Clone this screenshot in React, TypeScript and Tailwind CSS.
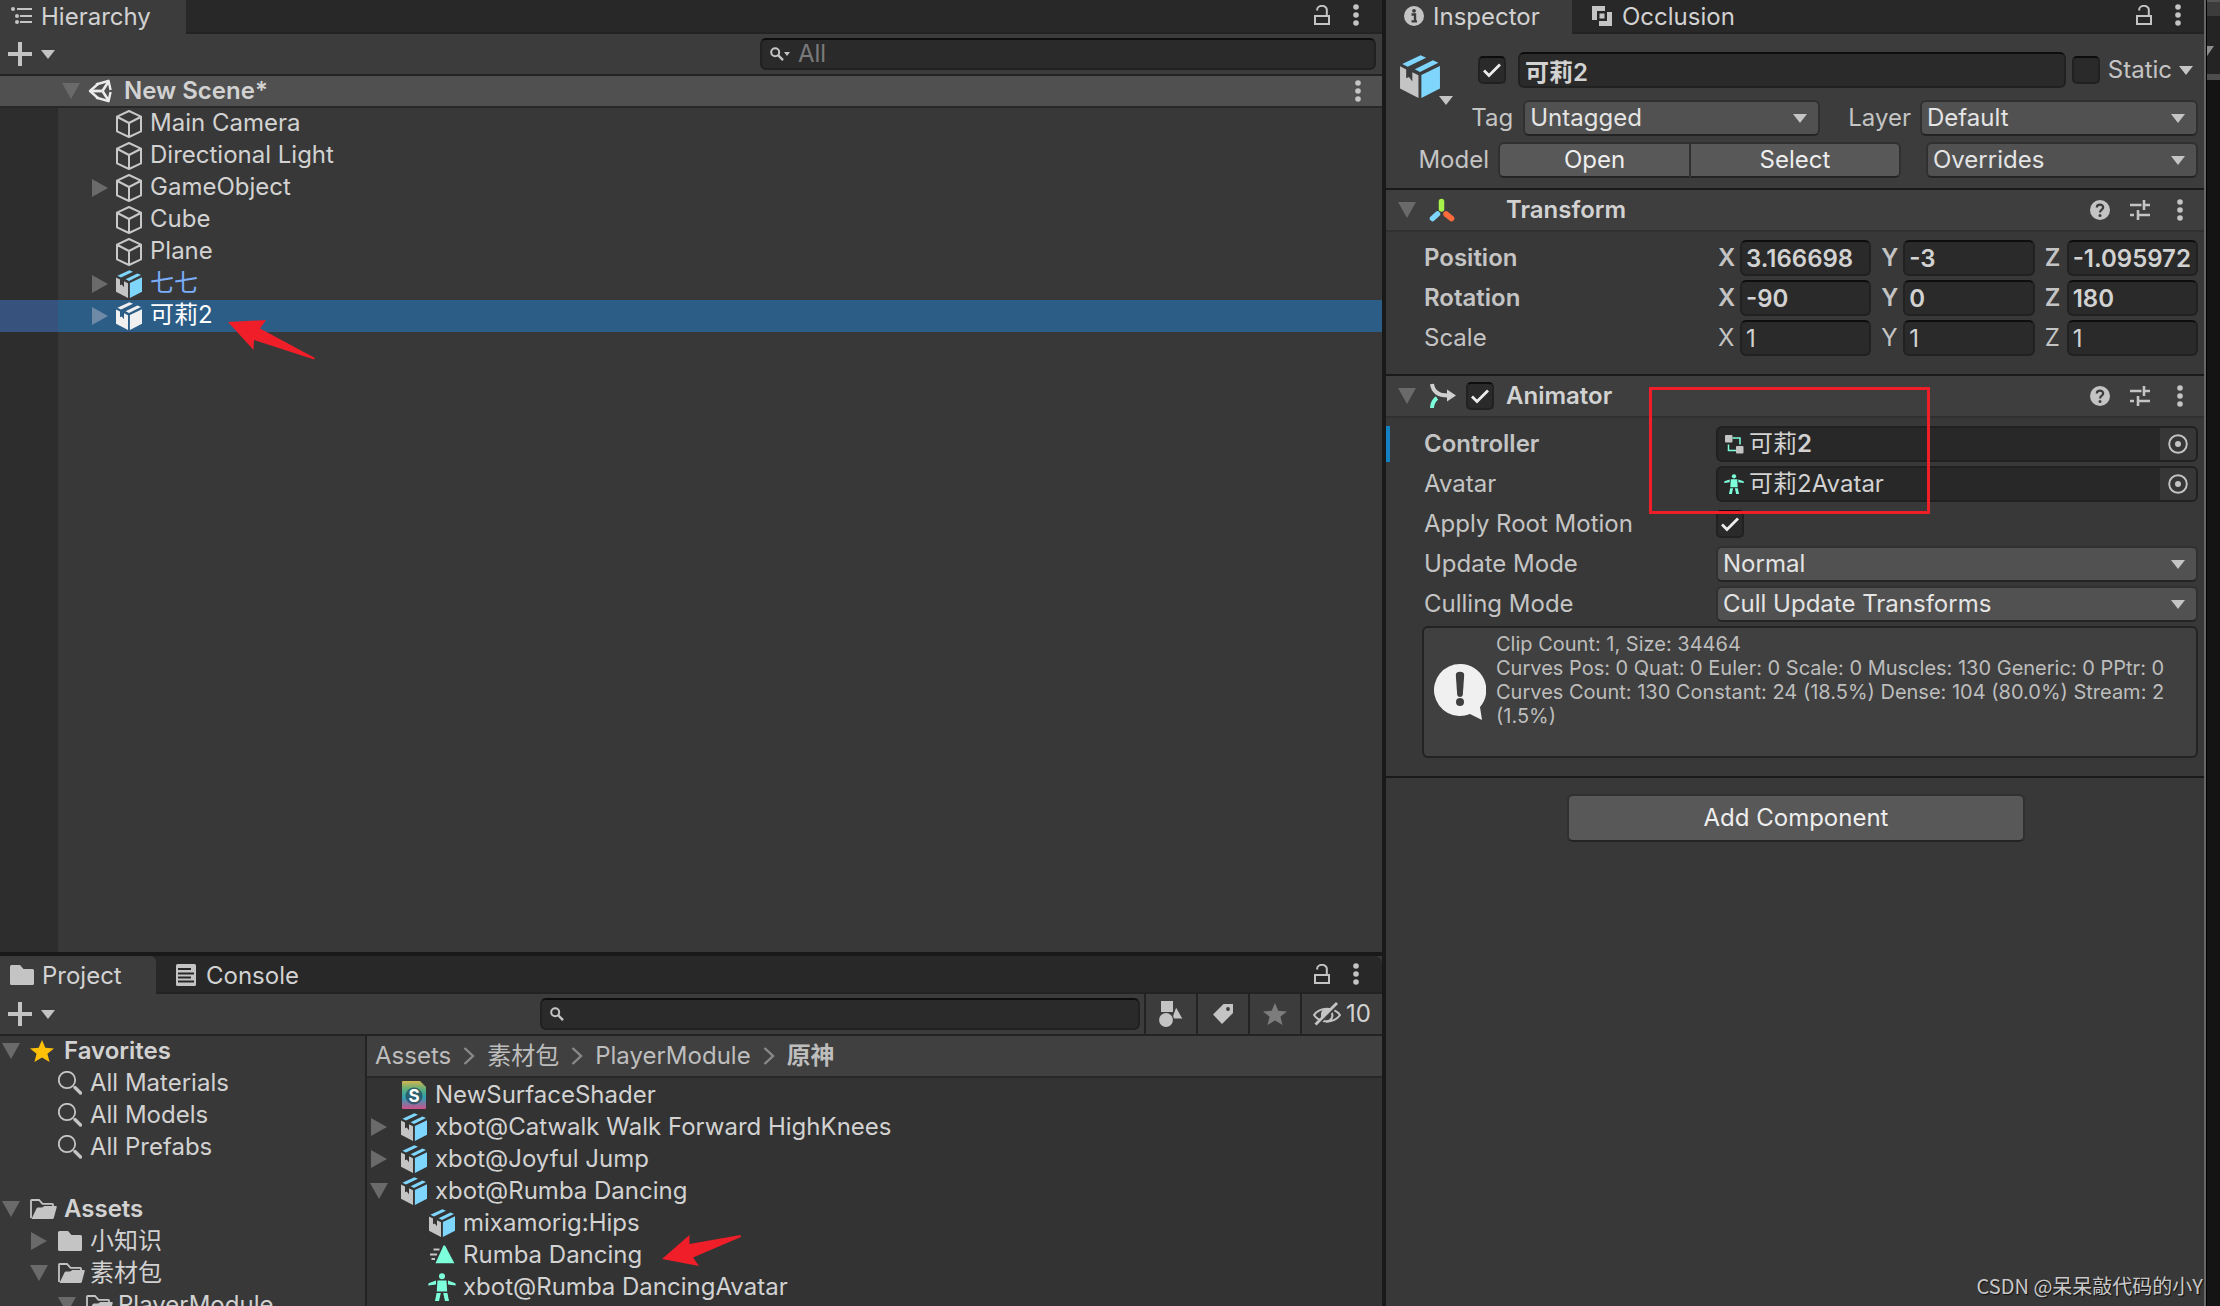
import React from "react";

type P = { className?: string };

/* ---------- icons ---------- */

const Down = ({ className = "w-[14px] h-[9px] text-[#c4c4c4]" }: P) => (
  <svg viewBox="0 0 14 9" className={`shrink-0 ${className}`} preserveAspectRatio="none" aria-hidden="true">
    <path d="M0 0H14L7 9Z" fill="currentColor" />
  </svg>
);

const Lock = () => (
  <svg viewBox="0 0 16 20" className="h-5 w-4" aria-hidden="true">
    <path d="M3.2 5.5V4.6a4.8 3.8 0 0 1 9.6 0V10.5" fill="none" stroke="#c4c4c4" strokeWidth="2" />
    <rect x="1" y="11" width="14" height="8" fill="none" stroke="#c4c4c4" strokeWidth="2" />
  </svg>
);

const Dots = () => (
  <svg viewBox="0 0 6 22" className="h-[22px] w-[6px]" aria-hidden="true">
    <circle cx="3" cy="3" r="2.8" fill="#c4c4c4" />
    <circle cx="3" cy="11" r="2.8" fill="#c4c4c4" />
    <circle cx="3" cy="19" r="2.8" fill="#c4c4c4" />
  </svg>
);

const Plus = () => (
  <svg viewBox="0 0 24 24" className="h-6 w-6" aria-hidden="true">
    <path d="M12 0V24M0 12H24" stroke="#c4c4c4" strokeWidth="4" />
  </svg>
);

const HierarchyIcon = () => (
  <svg viewBox="0 0 22 18" className="h-[18px] w-[22px]" aria-hidden="true">
    <g fill="#c4c4c4">
      <circle cx="2" cy="2" r="2" />
      <rect x="6" y="1" width="15" height="2" />
      <circle cx="6" cy="9" r="2" />
      <rect x="9" y="8" width="12" height="2" />
      <circle cx="6" cy="15" r="2" />
      <rect x="9" y="14" width="12" height="2" />
    </g>
  </svg>
);

const UnityLogo = () => (
  <svg viewBox="0 0 24 24" className="h-6 w-6" aria-hidden="true">
    <g fill="none" stroke="#ececec" strokeWidth="2.4" strokeLinejoin="round">
      <path d="M14.5 12H3" strokeWidth="2.8" />
      <path d="M14.5 12L20.5 2.5M14.5 12L20.5 21.5" strokeWidth="2.6" />
      <path d="M10.5 4.5L2 12l8.5 7.5" />
      <path d="M8 5.5L20.5 1.8L22.6 11" />
      <path d="M8 18.5L20.5 22.2L22.6 13" />
    </g>
  </svg>
);

const Cube = () => (
  <svg viewBox="0 0 26 28" className="h-7 w-[26px]" aria-hidden="true">
    <path
      d="M13 1L25 6.6V21.4L13 27L1 21.4V6.6ZM1.4 7L13 13L24.6 7M13 13V27"
      fill="none"
      stroke="#c8c8c8"
      strokeWidth="2"
      strokeLinejoin="round"
    />
  </svg>
);

const Prefab = ({ className = "h-7 w-[26px]", white = false }: P & { white?: boolean }) => (
  <svg viewBox="0 0 26 28" className={`shrink-0 ${className}`} aria-hidden="true">
    <g fill={white ? "#f0f0f0" : "#7fd6fd"}>
      <path d="M1.4 5.8L13.4 0.2L17 1.8L5 7.6Z" />
      <path d="M9.6 9.2L21.4 3.4L25 5L13 11Z" />
      <path d="M13.9 13L26 7.2V21.8L13.9 28Z" />
    </g>
    <path
      d="M0 7.4L4 9.4V15.2L5.8 14.4L8 17.2V11.3L12 13.2V28L0 21.8Z"
      fill={white ? "#f0f0f0" : "#c4c4c4"}
    />
  </svg>
);

const Avatar = ({ className = "h-7 w-7" }: P) => (
  <svg viewBox="0 0 28 28" className={`shrink-0 ${className}`} aria-hidden="true">
    <g fill="#7effdc">
      <circle cx="14" cy="3.2" r="3" />
      <path d="M9.5 7.5H18.5L19.2 18.5H8.8Z" />
      <path d="M8 7.6L0.6 10.2L0.2 12.6L8 11.6Z" />
      <path d="M20 7.6L27.4 10.2L27.8 12.6L20 11.6Z" />
      <path d="M8.6 20H12.8L11 28H7Z" />
      <path d="M15.2 20H19.4L21 28H17Z" />
    </g>
  </svg>
);

const Clip = () => (
  <svg viewBox="0 0 26 20" className="h-5 w-[26px]" aria-hidden="true">
    <path d="M16 0.5L25.4 18.2H6.5L14.5 0.5Z" fill="#7effdc" />
    <path d="M4.5 4.5H10.5M1 9.5H8M2.5 14H6" stroke="#c4c4c4" strokeWidth="1.8" />
  </svg>
);

const Shader = () => (
  <svg viewBox="0 0 24 28" className="h-7 w-6" aria-hidden="true">
    <defs>
      <linearGradient id="shader" x1="0" y1="0" x2="0" y2="1">
        <stop offset="0" stopColor="#d4b550" />
        <stop offset="0.3" stopColor="#5cae7c" />
        <stop offset="0.6" stopColor="#2f9fb4" />
        <stop offset="1" stopColor="#d0508c" />
      </linearGradient>
    </defs>
    <path d="M0 1Q0 0 1 0H18L24 6V27Q24 28 23 28H1Q0 28 0 27Z" fill="url(#shader)" />
    <circle cx="12" cy="15" r="8.5" fill="#234b5c" opacity="0.75" />
    <text x="12" y="21" textAnchor="middle" fontSize="17" fontWeight="700" fill="#fff">
      S
    </text>
  </svg>
);

const FolderClosed = () => (
  <svg viewBox="0 0 24 20" className="h-5 w-6" aria-hidden="true">
    <path d="M0 1.5Q0 0 1.5 0H10L13.5 4H22.5Q24 4 24 5.5V18.5Q24 20 22.5 20H1.5Q0 20 0 18.5Z" fill="#c4c4c4" />
  </svg>
);

const FolderOpen = () => (
  <svg viewBox="0 0 27 20" className="h-5 w-[27px]" aria-hidden="true">
    <path d="M1 19V1.8Q1 1 1.8 1H9L12.5 4.8H22.2Q23 4.8 23 5.6V8" fill="none" stroke="#c4c4c4" strokeWidth="1.8" />
    <path d="M6.5 9.5Q7 8.6 8 8.6H12L14.5 7H26Q27 7 26.7 8.2L23.8 19Q23.5 20 22.5 20H1.5Z" fill="#c4c4c4" />
  </svg>
);

const Magnifier = () => (
  <svg viewBox="0 0 24 24" className="h-6 w-6" aria-hidden="true">
    <circle cx="9" cy="9" r="8.2" fill="none" stroke="#c4c4c4" strokeWidth="1.8" />
    <path d="M17 16.5L22.5 22" stroke="#c4c4c4" strokeWidth="3.4" strokeLinecap="round" />
  </svg>
);

const SearchGlyph = () => (
  <svg viewBox="0 0 14 14" className="h-[14px] w-[14px] shrink-0" aria-hidden="true">
    <circle cx="5.2" cy="5.2" r="4" fill="none" stroke="#c4c4c4" strokeWidth="2" />
    <path d="M8 8L13 13.2" stroke="#c4c4c4" strokeWidth="2.4" />
  </svg>
);

const Star = ({ className = "text-[#ffc107]" }: P) => (
  <svg viewBox="0 0 24 22" className={`h-[22px] w-6 ${className}`} aria-hidden="true">
    <path d="M12 0L15.3 7.8L24 8.4L17.4 13.8L19.6 22L12 17.5L4.4 22L6.6 13.8L0 8.4L8.7 7.8Z" fill="currentColor" />
  </svg>
);

const ConsoleIcon = () => (
  <svg viewBox="0 0 20 22" className="h-[22px] w-5" aria-hidden="true">
    <rect width="20" height="22" rx="1.5" fill="#c4c4c4" />
    <path d="M2 5H15M2 9.5H18M2 13.5H15M2 17.5H18" stroke="#282828" strokeWidth="1.8" />
  </svg>
);

const InfoCircle = () => (
  <svg viewBox="0 0 20 20" className="h-5 w-5" aria-hidden="true">
    <circle cx="10" cy="10" r="10" fill="#c4c4c4" />
    <circle cx="10" cy="4.8" r="1.9" fill="#3c3c3c" />
    <path d="M7.5 8.5H11V15M7.5 15.4H13" stroke="#3c3c3c" strokeWidth="2.4" fill="none" />
  </svg>
);

const OcclusionIcon = () => (
  <svg viewBox="0 0 20 20" className="h-5 w-5" aria-hidden="true">
    <path d="M0 0H13V5H5V14H0Z" fill="#c4c4c4" />
    <path d="M15 6H20V20H7V15H15Z" fill="#c4c4c4" />
    <rect x="7.5" y="7.5" width="5" height="5" fill="#c4c4c4" />
  </svg>
);

const Help = () => (
  <svg viewBox="0 0 20 20" className="h-5 w-5" aria-hidden="true">
    <circle cx="10" cy="10" r="10" fill="#c4c4c4" />
    <path d="M6.8 7.4C6.8 3.6 13.2 3.6 13.2 7.4C13.2 9.6 10 9.6 10 12.4" fill="none" stroke="#3c3c3c" strokeWidth="2.2" />
    <circle cx="10" cy="15.5" r="1.5" fill="#3c3c3c" />
  </svg>
);

const Presets = () => (
  <svg viewBox="0 0 20 20" className="h-5 w-5" aria-hidden="true">
    <path d="M0 5H11.5M14 0V10M14 5H20M0 15H4M8 10V20M8 15H20" stroke="#c4c4c4" strokeWidth="2.6" />
  </svg>
);

const TransformIcon = () => (
  <svg viewBox="0 0 26 24" className="h-6 w-[26px]" aria-hidden="true">
    <g strokeLinecap="round" strokeWidth="5.5">
      <path d="M12.5 3.5V11" stroke="#a6f24b" />
      <path d="M8.5 16L3.5 20.5" stroke="#7fd6fd" />
      <path d="M17 16L22.5 20.5" stroke="#ff6b3d" />
    </g>
  </svg>
);

const AnimatorIcon = () => (
  <svg viewBox="0 0 28 26" className="h-[26px] w-7" aria-hidden="true">
    <path d="M3 1C4 8.5 9.5 12.5 19 12.5" fill="none" stroke="#d0d0d0" strokeWidth="4" />
    <path d="M18 6.5L27 12.5L18 18.5Z" fill="#d0d0d0" />
    <path d="M3 25C3.2 20.5 4.5 17.5 8 15" fill="none" stroke="#7effdc" strokeWidth="4" />
  </svg>
);

const ControllerIcon = () => (
  <svg viewBox="0 0 20 20" className="h-5 w-5 shrink-0" aria-hidden="true">
    <rect x="1" y="1" width="7.5" height="7.5" rx="1" fill="#c4c4c4" />
    <rect x="12" y="12" width="7.5" height="7.5" rx="1" fill="#c4c4c4" />
    <path d="M8.5 4H16V10.5M4.5 10.5V16.5H12" fill="none" stroke="#7effdc" strokeWidth="1.5" />
  </svg>
);

const Target = () => (
  <svg viewBox="0 0 20 20" className="h-5 w-5" aria-hidden="true">
    <circle cx="10" cy="10" r="8.8" fill="none" stroke="#c4c4c4" strokeWidth="1.9" />
    <circle cx="10" cy="10" r="3" fill="#c4c4c4" />
  </svg>
);

const Notice = () => (
  <svg viewBox="0 0 52 56" className="h-14 w-[52px] shrink-0" aria-hidden="true">
    <path d="M26 0A26 26 0 1 0 36 50L48 56L46 43A26 26 0 0 0 26 0Z" fill="#f0f0f0" />
    <path d="M21.8 11Q22 7.8 26 7.8T30.2 11L28.8 31Q28.4 33 26 33T23.2 31Z" fill="#3f3f3f" />
    <circle cx="26" cy="38" r="4" fill="#3f3f3f" />
  </svg>
);

const Shapes = () => (
  <svg viewBox="0 0 24 26" className="h-[26px] w-6" aria-hidden="true">
    <rect x="2" y="0" width="12" height="11" fill="#c4c4c4" />
    <path d="M17 5.5L24 18H12.5Z" fill="#c4c4c4" stroke="#3c3c3c" strokeWidth="1" />
    <circle cx="7" cy="19" r="7.5" fill="#c4c4c4" stroke="#3c3c3c" strokeWidth="1.2" />
  </svg>
);

const Tag = () => (
  <svg viewBox="0 0 20 20" className="h-5 w-5" aria-hidden="true">
    <path d="M10.5 0H20V9L9 20L0 10.5Z" fill="#c4c4c4" />
    <circle cx="15" cy="5" r="1.9" fill="#3c3c3c" />
  </svg>
);

const HiddenEye = () => (
  <svg viewBox="0 0 28 24" className="h-6 w-7" aria-hidden="true">
    <path d="M1 13C7 4.5 21 4.5 27 13C21 21.5 7 21.5 1 13Z" fill="none" stroke="#c4c4c4" strokeWidth="2" />
    <path d="M8 13a6 6.5 0 0 1 11-4L11 18.5A6 6 0 0 1 8 13Z" fill="#c4c4c4" />
    <path d="M18.5 10.5A6 6 0 0 1 13 19.5" fill="none" stroke="#c4c4c4" strokeWidth="2" />
    <path d="M3.5 23.5L26 1.8" stroke="#3c3c3c" strokeWidth="3" />
    <path d="M2.5 22.5L24 1" stroke="#c4c4c4" strokeWidth="2.8" />
  </svg>
);

/* ---------- shared controls ---------- */

const Foldout = ({ open = false, light = false, label }: { open?: boolean; light?: boolean; label: string }) => (
  <button
    type="button"
    aria-label={label}
    aria-expanded={open}
    className={`flex h-8 w-[18px] shrink-0 items-center justify-center ${light ? "text-[#6e8aa6]" : "text-[#6a6a6a]"}`}
  >
    {open ? (
      <Down className="h-4 w-[18px]" />
    ) : (
      <svg viewBox="0 0 16 18" className="h-[18px] w-4" aria-hidden="true">
        <path d="M0 0L16 9L0 18Z" fill="currentColor" />
      </svg>
    )}
  </button>
);

const FIELD = "rounded-[6px] border-2 border-[#212121] border-t-[#0d0d0d] bg-[#2a2a2a] text-[#d2d2d2] outline-none";

const Check = ({ label, checked = false }: { label: string; checked?: boolean }) => (
  <span className="relative block h-7 w-7 shrink-0">
    <input
      type="checkbox"
      aria-label={label}
      defaultChecked={checked}
      className="peer block h-7 w-7 appearance-none rounded-[5px] border-2 border-[#212121] border-t-[#0d0d0d] bg-[#2a2a2a]"
    />
    <svg
      viewBox="0 0 28 28"
      className="pointer-events-none absolute inset-0 hidden h-7 w-7 peer-checked:block"
      aria-hidden="true"
    >
      <path d="M6 14.5L11 19.5L22 8.5" fill="none" stroke="#ececec" strokeWidth="2.8" />
    </svg>
  </span>
);

const Select = ({ id, value, className = "" }: { id: string; value: string; className?: string }) => (
  <span className={`relative block ${className}`}>
    <select
      id={id}
      aria-label={value}
      defaultValue={value}
      className="block h-9 w-full appearance-none rounded-[6px] border-2 border-[#303030] border-b-[#242424] bg-[#515151] pl-[5px] text-2xl leading-7 text-[#e4e4e4] outline-none"
    >
      <option>{value}</option>
    </select>
    <span className="pointer-events-none absolute inset-y-0 right-[13px] flex items-center">
      <Down />
    </span>
  </span>
);

const TabTools = () => (
  <div className="ml-auto flex items-center gap-[23px] pr-[23px] pb-[3px]">
    <button type="button" aria-label="Lock">
      <Lock />
    </button>
    <button type="button" aria-label="Menu">
      <Dots />
    </button>
  </div>
);

const Tab = ({
  icon,
  children,
  active = false,
  className = "",
}: {
  icon: React.ReactNode;
  children: React.ReactNode;
  active?: boolean;
  className?: string;
}) => (
  <button
    type="button"
    role="tab"
    aria-selected={active}
    className={`flex items-center gap-2 text-[#d2d2d2] ${
      active ? "-mb-[2px] bg-[#3c3c3c] pb-[2px]" : ""
    } ${className}`}
  >
    {icon}
    <span className="pt-[2px] leading-8">{children}</span>
  </button>
);

const AddButton = () => (
  <button type="button" aria-label="Create" className="flex items-center gap-[9px] pl-2">
    <Plus />
    <Down />
  </button>
);

/* ---------- hierarchy ---------- */

const objects = [
  { name: "Main Camera", kind: "cube" },
  { name: "Directional Light", kind: "cube" },
  { name: "GameObject", kind: "cube", fold: true },
  { name: "Cube", kind: "cube" },
  { name: "Plane", kind: "cube" },
  { name: "七七", kind: "prefab", fold: true },
  { name: "可莉2", kind: "prefab", fold: true, selected: true },
];

const Hierarchy = () => (
  <section aria-label="Hierarchy" className="flex min-h-0 flex-1 flex-col bg-[#383838]">
    <div role="tablist" className="flex h-[34px] shrink-0 border-b-2 border-[#232323] bg-[#282828]">
      <Tab active icon={<HierarchyIcon />} className="w-[186px] pl-[11px]">
        Hierarchy
      </Tab>
      <TabTools />
    </div>
    <div className="flex h-[42px] shrink-0 items-center justify-between border-b-2 border-[#232323] bg-[#3c3c3c] pr-[6px]">
      <AddButton />
      <label className={`flex h-8 w-[616px] items-center pl-2 ${FIELD}`}>
        <SearchGlyph />
        <Down className="h-1 w-[6px] text-[#c4c4c4]" />
        <input
          type="text"
          aria-label="Search hierarchy"
          placeholder="All"
          className="ml-2 w-full bg-transparent leading-7 outline-none placeholder:text-[#7a7a7a]"
        />
      </label>
    </div>
    <div className="flex h-8 shrink-0 items-center border-b-2 border-[#282828] bg-[#505050] pr-[21px] pl-[62px]">
      <Foldout open label="Toggle scene" />
      <span className="mr-3 ml-2">
        <UnityLogo />
      </span>
      <span className="font-semibold">New Scene*</span>
      <button type="button" aria-label="Scene menu" className="ml-auto">
        <Dots />
      </button>
    </div>
    <ul className="flex-1 bg-linear-to-r from-[#2d2d2d] from-[58px] to-transparent to-[58px]">
      {objects.map((o) => (
        <li
          key={o.name}
          className={`relative flex h-8 items-center pl-[91px] ${
            o.selected ? "bg-linear-to-r from-[#37527c] from-[58px] to-[#2c5d87] to-[58px] text-white" : ""
          }`}
        >
          <span className="w-[25px]">{o.fold && <Foldout light={o.selected} label={`Toggle ${o.name}`} />}</span>
          {o.kind === "cube" ? <Cube /> : <Prefab white={o.selected} />}
          <span className={`ml-2 pb-[2px] ${o.name === "七七" ? "text-[#7baefa]" : ""}`}>{o.name}</span>
          {o.selected && (
            <svg viewBox="0 0 88 40" className="absolute top-5 left-[228px] h-10 w-[88px]" aria-hidden="true">
              <path d="M0 2L38 0L32 8.5L87 38L86 39.5L26 20L25.5 30Z" fill="#f01e28" />
            </svg>
          )}
        </li>
      ))}
    </ul>
  </section>
);

/* ---------- project ---------- */

const assets = [
  { name: "NewSurfaceShader", icon: <Shader />, depth: 0 },
  { name: "xbot@Catwalk Walk Forward HighKnees", icon: <Prefab />, depth: 0, fold: "closed" },
  { name: "xbot@Joyful Jump", icon: <Prefab />, depth: 0, fold: "closed" },
  { name: "xbot@Rumba Dancing", icon: <Prefab />, depth: 0, fold: "open" },
  { name: "mixamorig:Hips", icon: <Prefab />, depth: 1 },
  { name: "Rumba Dancing", icon: <Clip />, depth: 1, arrow: true },
  { name: "xbot@Rumba DancingAvatar", icon: <Avatar />, depth: 1 },
];

const Crumb = () => (
  <svg viewBox="0 0 12 18" className="mx-3 h-[18px] w-3" aria-hidden="true">
    <path d="M1.5 1L10 9L1.5 17" fill="none" stroke="#8a8a8a" strokeWidth="2.4" />
  </svg>
);

const Project = () => (
  <section aria-label="Project" className="flex h-[350px] shrink-0 flex-col overflow-hidden bg-[#383838]">
    <div role="tablist" className="flex h-[38px] shrink-0 rounded-tr-[8px] border-b-2 border-[#232323] bg-[#282828] pt-[2px]">
      <Tab active icon={<FolderClosed />} className="-mt-[2px] w-[156px] rounded-tr-[6px] pt-[2px] pl-[10px]">
        Project
      </Tab>
      <Tab icon={<ConsoleIcon />} className="pl-5">
        <span className="ml-[2px]">Console</span>
      </Tab>
      <TabTools />
    </div>
    <div className="flex h-[42px] shrink-0 border-b-2 border-[#232323] bg-[#3c3c3c]">
      <AddButton />
      <label className={`mr-1 ml-auto flex h-8 w-[600px] items-center self-center pl-2 ${FIELD}`}>
        <SearchGlyph />
        <input type="text" aria-label="Search assets" className="ml-2 w-full bg-transparent leading-7 outline-none" />
      </label>
      <button type="button" aria-label="Search by type" className="flex w-[52px] items-center justify-center border-l-2 border-[#232323]">
        <Shapes />
      </button>
      <button type="button" aria-label="Search by label" className="flex w-[52px] items-center justify-center border-l-2 border-[#232323]">
        <Tag />
      </button>
      <button type="button" aria-label="Save search" className="flex w-[52px] items-center justify-center border-l-2 border-[#232323]">
        <Star className="text-[#7c7c7c]" />
      </button>
      <button type="button" className="flex w-[82px] items-center justify-center gap-[5px] border-l-2 border-[#232323]">
        <HiddenEye />
        <span>10</span>
      </button>
    </div>
    <div className="flex min-h-0 flex-1">
      <div className="w-[367px] shrink-0 border-r-2 border-[#232323]">
        <ul className="-mt-px">
          <li className="flex h-8 items-center pl-[2px] font-semibold">
            <Foldout open label="Toggle Favorites" />
            <span className="mr-[10px] ml-[10px]">
              <Star />
            </span>
            Favorites
          </li>
          {["All Materials", "All Models", "All Prefabs"].map((n) => (
            <li key={n} className="flex h-8 items-center gap-2 pl-[58px]">
              <Magnifier />
              {n}
            </li>
          ))}
          <li className="mt-[30px] flex h-8 items-center pl-[2px] font-semibold">
            <Foldout open label="Toggle Assets" />
            <span className="mr-[7px] ml-[10px]">
              <FolderOpen />
            </span>
            Assets
          </li>
          <li className="flex h-8 items-center pl-[30px]">
            <Foldout label="Toggle 小知识" />
            <span className="mr-2 ml-[10px]">
              <FolderClosed />
            </span>
            小知识
          </li>
          <li className="flex h-8 items-center pl-[30px]">
            <Foldout open label="Toggle 素材包" />
            <span className="mr-[5px] ml-[10px]">
              <FolderOpen />
            </span>
            素材包
          </li>
          <li className="flex h-8 items-center pl-[58px]">
            <Foldout open label="Toggle PlayerModule" />
            <span className="mr-[5px] ml-[10px]">
              <FolderOpen />
            </span>
            PlayerModule
          </li>
        </ul>
      </div>
      <div className="min-w-0 flex-1 bg-[#333333]">
        <nav aria-label="Breadcrumb" className="flex h-[42px] items-center border-b-2 border-[#282828] bg-[#404040] pl-2 text-[#bdbdbd]">
          <a href="#assets">Assets</a>
          <Crumb />
          <a href="#pack">素材包</a>
          <Crumb />
          <a href="#module">PlayerModule</a>
          <Crumb />
          <a href="#folder" className="font-semibold">
            原神
          </a>
        </nav>
        <ul className="pt-px">
          {assets.map((a) => (
            <li key={a.name} className={`relative flex h-8 items-center ${a.depth ? "pl-[31px]" : "pl-[3px]"}`}>
              <span className="w-[30px]">{a.fold && <Foldout open={a.fold === "open"} label={`Toggle ${a.name}`} />}</span>
              <span className="mr-[7px] flex w-7 justify-center">{a.icon}</span>
              {a.name}
              {a.arrow && (
                <svg viewBox="0 0 80 32" className="absolute top-[-4px] left-[295px] h-8 w-20" aria-hidden="true">
                  <path d="M0 24L27.5 0V9L78.5 0L79 2L31 22.5L37 31Z" fill="#f01e28" />
                </svg>
              )}
            </li>
          ))}
        </ul>
      </div>
    </div>
  </section>
);

/* ---------- inspector ---------- */

const Header = ({ title, icon, check }: { title: string; icon: React.ReactNode; check?: boolean }) => (
  <div className="flex h-11 items-center border-y-2 border-t-[#1a1a1a] border-b-[#303030] bg-[#3e3e3e] pr-[21px] pl-3">
    <Foldout open label={`Toggle ${title}`} />
    <span className="ml-[13px] flex w-[37px]">{icon}</span>
    <span className="w-10">{check && <Check checked label={`Enable ${title}`} />}</span>
    <h2 className="font-semibold">{title}</h2>
    <div className="ml-auto flex items-center">
      <button type="button" aria-label="Help">
        <Help />
      </button>
      <button type="button" aria-label="Presets" className="mr-[27px] ml-5">
        <Presets />
      </button>
      <button type="button" aria-label="Component menu">
        <Dots />
      </button>
    </div>
  </div>
);

const Row = ({
  label,
  bold = false,
  htmlFor,
  children,
}: {
  label: string;
  bold?: boolean;
  htmlFor?: string;
  children: React.ReactNode;
}) => (
  <div className={`flex h-9 items-center pr-[6px] pl-[38px] ${bold ? "font-semibold" : ""}`}>
    <label htmlFor={htmlFor} className="w-[292px] shrink-0 text-[#c4c4c4]">
      {label}
    </label>
    <div className="min-w-0 flex-1">{children}</div>
  </div>
);

const Vector = ({ label, values, bold }: { label: string; values: string[]; bold?: boolean }) => (
  <Row label={label} bold={bold}>
    <div className="grid grid-cols-3 gap-2">
      {["X", "Y", "Z"].map((axis, i) => (
        <label key={axis} className="flex items-center text-[#c4c4c4]">
          <span className="w-6 shrink-0 pl-[2px]">{axis}</span>
          <input type="text" defaultValue={values[i]} className={`h-9 w-full min-w-0 pl-1 ${FIELD}`} />
        </label>
      ))}
    </div>
  </Row>
);

const ObjectField = ({ icon, children, name }: { icon: React.ReactNode; children: React.ReactNode; name: string }) => (
  <div className="flex h-9 items-center overflow-hidden rounded-[6px] border-2 border-[#202020] bg-[#282828] pl-[6px]">
    {icon}
    <span className="ml-[5px] text-[#d2d2d2]">{children}</span>
    <button type="button" aria-label={`Pick ${name}`} className="ml-auto flex h-full w-9 items-center justify-center bg-[#373737]">
      <Target />
    </button>
  </div>
);

const Inspector = () => (
  <section aria-label="Inspector" className="flex w-[820px] shrink-0 flex-col border-r-2 border-[#666666] bg-[#383838]">
    <div role="tablist" className="flex h-[34px] shrink-0 border-b-2 border-[#232323] bg-[#282828]">
      <Tab active icon={<InfoCircle />} className="w-[186px] pl-[18px]">
        <span className="ml-px">Inspector</span>
      </Tab>
      <Tab icon={<OcclusionIcon />} className="pl-5">
        <span className="ml-[2px]">Occlusion</span>
      </Tab>
      <TabTools />
    </div>

    <div className="flex flex-col gap-[6px] bg-[#3c3c3c] pt-[18px] pr-[6px] pb-[10px] text-[#c4c4c4]">
      <div className="flex h-9 items-center pl-[14px]">
        <button type="button" aria-label="Choose icon" className="relative mr-[38px] h-9 w-10">
          <Prefab className="absolute top-[3px] left-0 h-[43px] w-10" />
          <Down className="absolute top-11 left-[39px] h-[9px] w-[14px]" />
        </button>
        <Check checked label="Active" />
        <input
          type="text"
          aria-label="Name"
          defaultValue="可莉2"
          className={`mr-[6px] ml-3 h-9 min-w-0 flex-1 pl-[5px] font-semibold ${FIELD}`}
        />
        <Check label="Static" />
        <span className="ml-2">Static</span>
        <button type="button" aria-label="Static options" className="mr-[5px] ml-[7px]">
          <Down />
        </button>
      </div>
      <div className="mt-[6px] flex h-9 items-center justify-end">
        <label htmlFor="tag" className="mr-[10px]">
          Tag
        </label>
        <Select id="tag" value="Untagged" className="w-[297px]" />
        <label htmlFor="layer" className="mr-[9px] ml-7">
          Layer
        </label>
        <Select id="layer" value="Default" className="w-[278px]" />
      </div>
      <div className="flex h-9 items-center justify-end">
        <span className="mr-[9px]">Model</span>
        <button
          type="button"
          className="h-9 w-[192px] rounded-l-[6px] border-2 border-r border-[#303030] border-b-[#242424] bg-[#585858] leading-8 text-[#eeeeee]"
        >
          Open
        </button>
        <button
          type="button"
          className="h-9 w-[211px] rounded-r-[6px] border-2 border-l border-[#303030] border-b-[#242424] bg-[#585858] leading-8 text-[#eeeeee]"
        >
          Select
        </button>
        <Select id="overrides" value="Overrides" className="ml-[25px] w-[272px]" />
      </div>
    </div>

    <Header title="Transform" icon={<TransformIcon />} />
    <div className="flex flex-col gap-1 pt-2 pb-[18px]">
      <Vector bold label="Position" values={["3.166698", "-3", "-1.095972"]} />
      <Vector bold label="Rotation" values={["-90", "0", "180"]} />
      <Vector label="Scale" values={["1", "1", "1"]} />
    </div>

    <div className="relative">
      <Header check title="Animator" icon={<AnimatorIcon />} />
      <div className="flex flex-col gap-1 pt-2">
        <div className="border-l-4 border-[#1380c4] [&>div]:pl-[34px]">
          <Row bold label="Controller">
            <ObjectField name="controller" icon={<ControllerIcon />}>
              <span className="font-normal">可莉</span>2
            </ObjectField>
          </Row>
        </div>
        <Row label="Avatar">
          <ObjectField name="avatar" icon={<Avatar className="h-5 w-5" />}>
            可莉2Avatar
          </ObjectField>
        </Row>
        <Row label="Apply Root Motion">
          <Check checked label="Apply Root Motion" />
        </Row>
        <Row label="Update Mode" htmlFor="update">
          <Select id="update" value="Normal" />
        </Row>
        <Row label="Culling Mode" htmlFor="culling">
          <Select id="culling" value="Cull Update Transforms" />
        </Row>
        <div className="mr-[6px] ml-9 flex h-[132px] rounded-[6px] border-2 border-[#232323] bg-[#404040] pt-1 pl-[10px] text-[20px] leading-6 text-[#bdbdbd]">
          <div className="mr-[10px] pt-8">
            <Notice />
          </div>
          <p>
            Clip Count: 1, Size: 34464
            <br />
            Curves Pos: 0 Quat: 0 Euler: 0 Scale: 0 Muscles: 130 Generic: 0 PPtr: 0
            <br />
            Curves Count: 130 Constant: 24 (18.5%) Dense: 104 (80.0%) Stream: 2
            <br />
            (1.5%)
          </p>
        </div>
      </div>
      <div className="pointer-events-none absolute top-[13px] left-[263px] h-[127px] w-[281px] border-[3px] border-[#f01e28]" />
    </div>

    <div className="mt-[18px] flex justify-center border-t-2 border-[#1a1a1a] pt-4">
      <button
        type="button"
        className="ml-[2px] h-12 w-[458px] rounded-[6px] border-2 border-[#303030] border-b-[#242424] bg-[#585858] text-[#eeeeee]"
      >
        Add Component
      </button>
    </div>
    <p className="mt-auto pr-px pb-[5px] text-right font-['Noto_Sans_CJK_SC',sans-serif] text-[20px] leading-[30px] text-[#c8c8c8] [text-shadow:1px_1px_1px_#111]">
      CSDN @呆呆敲代码的小Y
    </p>
  </section>
);

export default function App() {
  return (
    <main className="flex h-screen overflow-hidden bg-[#191919] font-['Inter','Noto_Sans_CJK_SC',sans-serif] text-2xl leading-8 whitespace-nowrap text-[#d2d2d2]">
      <div className="flex min-w-0 flex-1 flex-col gap-1">
        <Hierarchy />
        <Project />
      </div>
      <div className="w-1 shrink-0" />
      <Inspector />
      <aside aria-hidden="true" className="w-[14px] shrink-0 overflow-hidden border-l border-black bg-[#141414]">
        <div className="h-4 border-t-2 border-[#555555] bg-[#3c3c3c]" />
        <div className="h-[58px] bg-[#242424] pt-[30px]">
          <Down className="-ml-[7px] h-[10px] w-[14px] text-[#8c8c8c]" />
        </div>
        <div className="h-[6px] bg-[#4d4d4d]" />
      </aside>
    </main>
  );
}
